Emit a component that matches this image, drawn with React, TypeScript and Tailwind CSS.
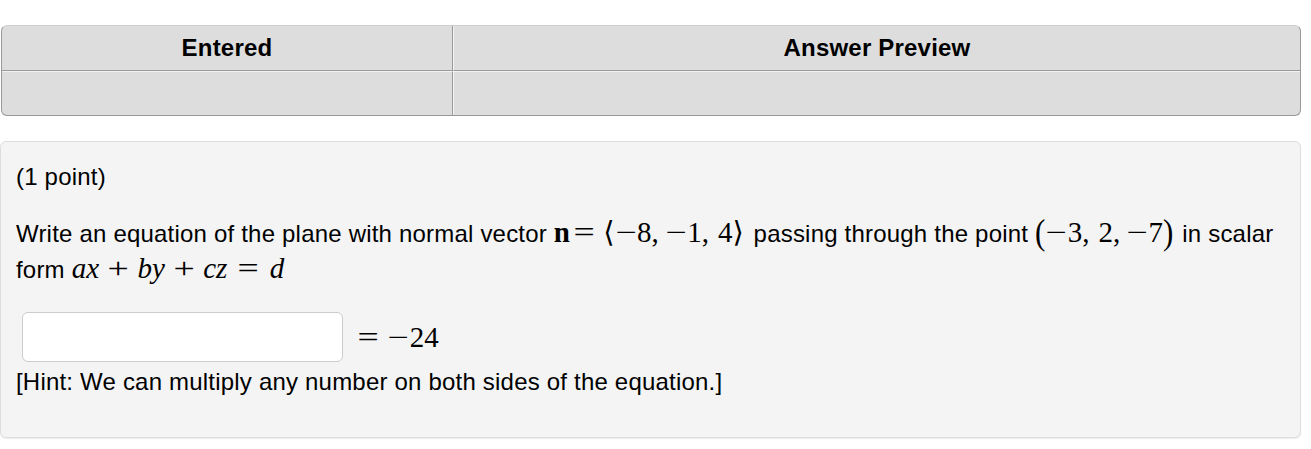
import React from "react";

// Inline math piece set in a serif face, sized up like typeset TeX next to 24px body text.
function M({ children, className = "" }: { children: React.ReactNode; className?: string }) {
  return (
    <span className={"font-['Liberation_Serif','DejaVu_Serif','DejaVu_Sans',serif] text-[29px] leading-none tracking-normal " + className}>
      {children}
    </span>
  );
}

// Italic math variable.
function V({ children }: { children: React.ReactNode }) {
  return <span className="italic">{children}</span>;
}

// Binary operator / relation, stretched a little wider like TeX's operator glyphs.
function Op({ children, className = "" }: { children: React.ReactNode; className?: string }) {
  return <span className={"inline-block scale-x-[1.3] " + className}>{children}</span>;
}

export default function App() {
  return (
    <div className="min-h-screen bg-white text-black font-['Liberation_Sans',Arial,sans-serif] text-[24px] tracking-[0.2px]">
      <div className="w-[1302px] pt-[25px]">
        {/* Results table */}
        <div className="ml-[1px] w-[1300px] overflow-hidden rounded-[6px] border border-[#999] border-t-[#cfcfcf] bg-[#ddd]">
          <div className="grid grid-cols-[451px_1fr]">
            <div className="flex h-[45px] items-center justify-center border-r border-b border-[#999] font-bold">
              Entered
            </div>
            <div className="flex h-[45px] items-center justify-center border-b border-l border-[#999] border-l-[#f2f2f2] font-bold">
              Answer Preview
            </div>
            <div className="h-[44px] border-r border-t border-[#999] border-t-[#f2f2f2]" />
            <div className="h-[44px] border-l border-t border-[#f2f2f2]" />
          </div>
        </div>

        {/* Problem body */}
        <div className="mt-[25px] w-[1301px] rounded-[6px] border border-[#dedede] bg-[#f4f4f4] pt-[17px] pb-[37px] pl-[15px] leading-[36px] shadow-[0_1px_1px_rgba(0,0,0,0.08)]">
          <p>(1 point)</p>
          <div className="mt-[21px]">
            <div className="whitespace-nowrap">
              Write an equation of the plane with normal vector{" "}
              <M>
                <span className="font-bold">n</span>
                <Op className="ml-[6px] mr-[11px]">=</Op>
                <span>⟨</span>
                <Op className="mx-[3px]">−</Op>8,
                <Op className="ml-[9px] mr-[3px]">−</Op>1,
                <span className="ml-[9px] mr-[3px]">4⟩</span>
              </M>{" "}
              passing through the point{" "}
              <M>
                <span className="inline-block scale-y-[1.15] text-[31px]">(</span>
                <Op className="mx-[3px]">−</Op>3,
                <span className="ml-[9px]">2,</span>
                <Op className="ml-[9px] mr-[3px]">−</Op>7
                <span className="mr-[2px] inline-block scale-y-[1.15] text-[31px]">)</span>
              </M>{" "}
              in scalar
            </div>
            <div className="whitespace-nowrap">
              form{" "}
              <M>
                <V>ax</V>
                <Op className="mx-[11px]">+</Op>
                <V>by</V>
                <Op className="mx-[11px]">+</Op>
                <V>cz</V>
                <Op className="mx-[13px]">=</Op>
                <V>d</V>
              </M>
            </div>
          </div>
          <div className="mt-[24px] flex h-[50px] items-center">
            <input
              type="text"
              className="ml-[6px] h-[50px] w-[321px] rounded-[6px] border border-[#cccccc] bg-white outline-none"
            />
            <M className="ml-[17px]">
              <Op>=</Op>
              <Op className="ml-[14px] mr-[3px]">−</Op>24
            </M>
          </div>
          <p className="mt-[2px]">[Hint: We can multiply any number on both sides of the equation.]</p>
        </div>
      </div>
    </div>
  );
}
